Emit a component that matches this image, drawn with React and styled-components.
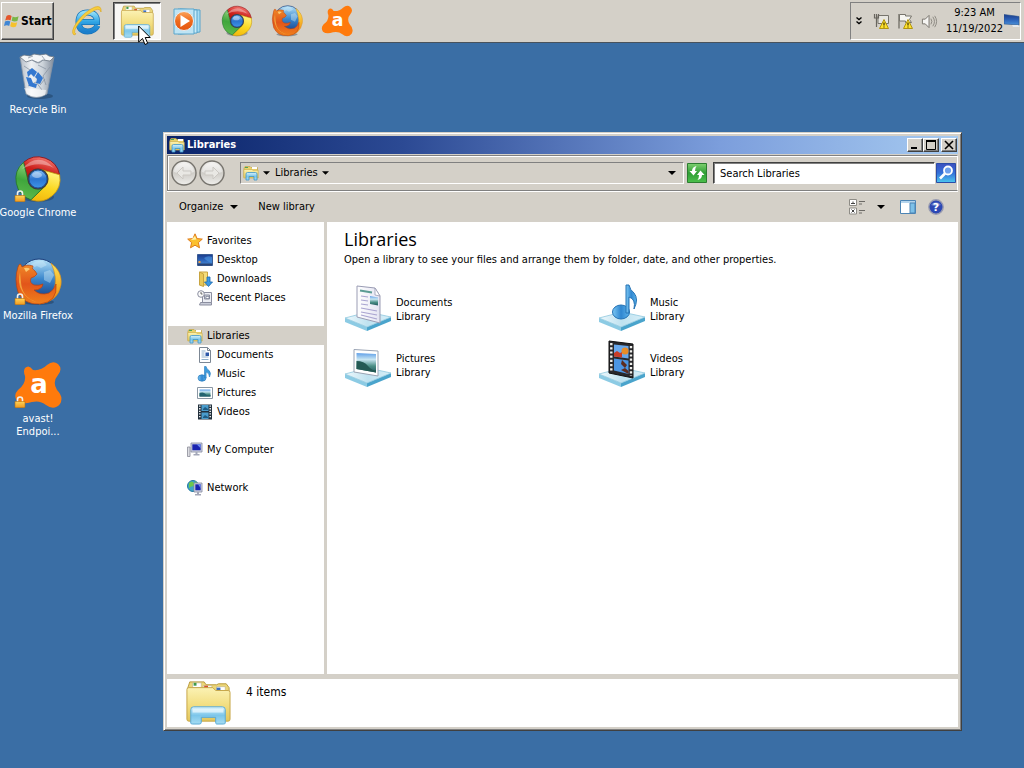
import React from "react";
import styled, { createGlobalStyle, css } from "styled-components";

const face = "#d4d0c8";
const uiFont = '"DejaVu Sans Condensed", "DejaVu Sans", "Liberation Sans", sans-serif';

const GlobalStyle = createGlobalStyle`
  * { box-sizing: border-box; }
  body { margin: 0; background: #3a6ea5; font: 11px/14px ${uiFont}; color: #000; }
  button, input { font: inherit; color: inherit; margin: 0; }
  svg { display: block; flex: none; }
`;

const raised = css`
  border: 1px solid;
  border-color: #fff #404040 #404040 #fff;
  box-shadow: inset -1px -1px 0 #808080;
`;
const sunken = css`
  border: 1px solid;
  border-color: #808080 #fff #fff #808080;
`;
const plainButton = css`
  border: 0;
  padding: 0;
  background: none;
`;

/* ---------- shared paint ---------- */

const HiddenSvg = styled.svg`
  position: absolute;
  width: 0;
  height: 0;
`;

const Grad = ({ id, stops, flat }) => (
  <linearGradient id={id} x1="0" y1="0" x2={flat ? "1" : "0"} y2={flat ? "0" : "1"}>
    {stops.map((c, i) => (
      <stop key={i} offset={i / (stops.length - 1)} stopColor={c} />
    ))}
  </linearGradient>
);

const Paints = () => (
  <HiddenSvg aria-hidden="true">
    <defs>
      <Grad id="folder" stops={["#fbf2b4", "#f3df83", "#e3c65c"]} />
      <Grad id="stand" stops={["#d8f2fc", "#7cc6ea", "#a5dcf2"]} />
      <Grad id="red" stops={["#f0706a", "#cc1f1a", "#a80f10"]} />
      <Grad id="green" stops={["#8fd27c", "#3fa63c", "#5cb84c"]} />
      <Grad id="yellow" stops={["#fff27a", "#fbd721", "#f2b70c"]} />
      <Grad id="blue" stops={["#8cc4f6", "#2b74d0", "#3f94e8"]} />
      <Grad id="fox" stops={["#f08a28", "#e2551a", "#f0801c"]} />
      <Grad id="foxTail" stops={["#fbe25c", "#f6b52a", "#ee7a18"]} />
      <Grad id="globe" stops={["#b6e2f8", "#3a86cc", "#173f86"]} />
      <Grad id="ie" stops={["#8fdcf8", "#2fa4e4", "#1c7fcc"]} />
      <Grad id="orange" stops={["#fba45c", "#ef6a1c", "#e45510"]} />
      <Grad id="glassTop" flat stops={["#eef8fc", "#bfe2f0", "#d8eff8"]} />
      <Grad id="note" flat stops={["#7cc8f4", "#2f86d0", "#5cb4ec"]} />
      <Grad id="sky" stops={["#5f9fe8", "#c9e6f2", "#4b8f86", "#235a60"]} />
      <Grad id="screen" stops={["#1c3c8c", "#2c62b8", "#4a90d8"]} />
      <Grad id="paper" flat stops={["#ffffff", "#e4e4f2"]} />
      <Grad id="bin" flat stops={["#b4bcc6", "#eef1f4", "#ccd3da", "#808b9a"]} />
      <Grad id="lock" stops={["#ffd35a", "#f0981c"]} />
      <Grad id="nav" stops={["#f4f3f1", "#cfcdc8", "#efeeeb"]} />
      <Grad id="go" stops={["#7fd070", "#2f9e34", "#4cc04c"]} />
      <Grad id="find" stops={["#3c50c0", "#3470d8", "#4cc8f0"]} />
    </defs>
  </HiddenSvg>
);

const Svg = ({ size, box = size, children, ...rest }) => (
  <svg width={size} height={size} viewBox={`0 0 ${box} ${box}`} fill="none" aria-hidden="true" {...rest}>
    {children}
  </svg>
);

/* ---------- application icons ---------- */

const ExplorerIcon = ({ size }) => (
  <Svg size={size} box={48}>
    <path d="M3 9 L5 3 H20 L22 6 H33 L35 5 H43 L46 9 V42 H3Z" fill="#ecd678" stroke="#b89a3c" />
    <path d="M8 4h9v5H8zM19 7h9v5h-9zM33 8h9v4h-9z" fill="#fff" stroke="#b9ae88" strokeWidth=".6" />
    <path d="M9 4h3v3H9z" fill="#3f9a4a" />
    <path d="M20 7h4v3h-4z" fill="#d8502e" />
    <path d="M33 9h4v3h-4z" fill="#3b6fc0" />
    <path d="M2 11 Q2 9 4 9 H29 L32 12 H45 Q47 12 47 14 V42 Q47 44 45 44 H4 Q2 44 2 42Z" fill="url(#folder)" stroke="#c6a548" />
    <path d="M6 46 V32 Q6 29 9 29 H39 Q42 29 42 32 V46 Q42 47 40 47 H33 Q32 47 32 45 V40 H17 V45 Q17 47 15 47 H8 Q6 47 6 46Z" fill="url(#stand)" stroke="#58a8d4" />
    <path d="M8 31h32v4H8z" fill="#eefaff" opacity=".7" />
  </Svg>
);

const SmallLibraryIcon = () => (
  <Svg size={16}>
    <path d="M1 3 L2 1.5 H7 L8 2.5 H14.5 V12 H1Z" fill="#ead36c" stroke="#c2a548" strokeWidth=".7" />
    <path d="M9 2h5v2H9z" fill="#fff" />
    <path d="M2 2h3v1H2z" fill="#4da35a" />
    <path d="M.8 4.5H9l1 .8h5.2V13H.8z" fill="url(#folder)" stroke="#cdb04f" strokeWidth=".7" />
    <path d="M3 15V9q0-1.500 1.500-1.500h8q1.500 0 1.500 1.500v6h-3v-3.500H6V15z" fill="url(#stand)" stroke="#3a94cc" strokeWidth=".8" />
  </Svg>
);

const ChromeIcon = ({ size }) => (
  <Svg size={size} box={48}>
    <ellipse cx="24" cy="42" rx="16" ry="5" fill="#1a2a40" opacity=".35" />
    <g transform="rotate(16 24 24)" strokeWidth=".8">
      <path d="M5.500 12 A22 22 0 0 1 43.600 14 H24 A10 10 0 0 0 15.300 29Z" fill="url(#red)" stroke="#931012" />
      <path d="M43.600 14 A22 22 0 0 1 22.900 46 L32.700 29 A10 10 0 0 0 24 14Z" fill="url(#yellow)" stroke="#c99710" />
      <path d="M22.900 46 A22 22 0 0 1 5.500 12 L15.300 29 A10 10 0 0 0 32.700 29Z" fill="url(#green)" stroke="#23782a" />
    </g>
    <path d="M8 14 Q24 -4 40 13 Q24 5 8 14Z" fill="#fff" opacity=".35" />
    <circle cx="24" cy="24" r="10.500" fill="#403c3c" />
    <circle cx="24" cy="24" r="9" fill="url(#blue)" stroke="#1b559f" />
    <ellipse cx="23" cy="20" rx="5" ry="3" fill="#fff" opacity=".4" />
  </Svg>
);

const FirefoxIcon = ({ size }) => (
  <Svg size={size} box={48}>
    <ellipse cx="24" cy="44" rx="16" ry="3" fill="#14243c" opacity=".35" />
    <circle cx="25" cy="21" r="20" fill="url(#globe)" stroke="#1d3f7c" />
    <path d="M17 6q6-4 12-3l4 4-6 3-4-2-5 2zM30 14l6-2 4 5-4 8-6-3z" fill="#d8f0fb" opacity=".4" />
    <path d="M37 5 Q49 14 47 27 Q44 44 25 46 Q36 41 40 31 Q44 20 37 5Z" fill="url(#foxTail)" stroke="#d98a16" strokeWidth=".6" />
    <path d="M4 9 Q6 3 8 9 Q12 6 19 8 Q17 11 21 13 L23 16 Q21 19 17 20 Q15 25 20 27 Q25 28 29 26 Q28 32 20 32 Q26 38 35 35 Q40 32 42 26 Q44 44 26 46 Q10 47 4 34 Q0 21 4 9Z" fill="url(#fox)" stroke="#b9400f" strokeWidth=".7" />
    <path d="M6 14 Q3 25 8 33 Q13 42 23 44 Q8 40 7 24Z" fill="#fac14a" opacity=".7" />
    <path d="M10 10q4-1 6 1l-4 3z" fill="#fbc870" />
  </Svg>
);

const AvastIcon = ({ size }) => (
  <Svg size={size} box={48}>
    <path d="M19 9 Q27 10 33 4 Q39 -1 44 3 Q49 8 44 14 Q38 21 43 29 Q50 36 46 43 Q40 50 32 44 Q26 39 18 41 Q8 44 3 40 Q-1 34 4 29 Q12 23 11 15 Q9 10 11 7 Q15 3 19 9Z" fill="#ff7a0c" />
    <text x="25" y="32" textAnchor="middle" fontFamily="DejaVu Sans, sans-serif" fontWeight="700" fontSize="26" fill="#fff">a</text>
  </Svg>
);

const IeIcon = ({ size }) => (
  <Svg size={size} box={32}>
    <path d="M26.500 20.500 Q23.500 26.500 16.500 26.500 Q7.500 26 7.500 16.500 Q8 7.500 16.500 7.500 Q26 7.500 26 17 H9" stroke="#1673b8" strokeWidth="6" />
    <path d="M26.500 20.500 Q23.500 26.500 16.500 26.500 Q7.500 26 7.500 16.500 Q8 7.500 16.500 7.500 Q26 7.500 26 17 H9" stroke="url(#ie)" strokeWidth="4.600" />
    <path d="M3 30 Q-1 27 6 17 Q14 6 24 2 Q31 0 30 7 Q29 3 24 5 Q15 9 8 18 Q1 27 5 29Z" fill="#f8ce3c" stroke="#dca41c" strokeWidth=".6" />
  </Svg>
);

const MediaPlayerIcon = ({ size }) => (
  <Svg size={size} box={32}>
    <path d="M9 4 L29 5 V27 L9 29Z" fill="#a8dcf2" stroke="#58a4cc" />
    <path d="M7 4 L26 5 V28 L7 29Z" fill="#c9ebf8" stroke="#58a4cc" />
    <path d="M3 4 H23 V29 H3Z" fill="#bfe4f4" stroke="#5aa6cc" />
    <circle cx="13" cy="16" r="9.500" fill="url(#orange)" stroke="#e8eef2" />
    <path d="M9.500 10 L19 16 L9.500 22Z" fill="#fff" />
  </Svg>
);

const RecycleIcon = () => (
  <Svg size={48}>
    <ellipse cx="26" cy="44" rx="13" ry="3" fill="#16304c" opacity=".4" />
    <path d="M6 5 L12 42 Q22 49 33 42 L40 5Z" fill="url(#bin)" stroke="#8894a4" strokeWidth=".8" />
    <path d="M6 5 L10 3 L16 4 L20 2 L26 3 L32 2 L35 4 L40 5 L36 9 L29 8 L25 11 L18 8 L12 10Z" fill="#f4f6f8" stroke="#6c7784" strokeWidth=".8" />
    <path d="M18 8l5 3 6-3M28 4l3 4M14 6l5-2M10 14l9 6M36 15l-7 9 3 9M14 34l8-4 6 8M24 13l8 4M31 27l-5 6" stroke="#8a95a3" strokeWidth=".8" />
    <path d="M10 36 L32 38 L31 43 Q22 47 13 42Z" fill="#fff" opacity=".6" />
    <path d="M13 20l5-4 5 4-3 5-3-3-3 3zM24 20l5 6-3 6-4-1 1-4-2-2zM12 25l5 1 2 5 4 1-1 4-7-2z" fill="#3478d0" />
  </Svg>
);

const LockIcon = () => (
  <Svg size={12}>
    <path d="M3.500 6V3.500a2.500 2.500 0 0 1 5 0V6" stroke="#f2f2ee" strokeWidth="1.600" />
    <path d="M1 5.500h10V11q0 .8-1 .8H2q-1 0-1-.8z" fill="url(#lock)" stroke="#b8700e" strokeWidth=".6" />
  </Svg>
);

const FlagLogo = () => (
  <Svg size={16}>
    <path d="M2.500 3 Q5 1 7.600 3 L6.600 7.500 Q4 6 1.200 7.600Z" fill="#e4562c" />
    <path d="M8.600 3.500 Q11 5 14.600 3.300 L13.400 8 Q10.500 9 7.600 7.800Z" fill="#7ab648" />
    <path d="M1 8.600 Q4 7 6.300 8.500 L5.200 13 Q3 11.500 0 13Z" fill="#3f86d4" />
    <path d="M7.300 9 Q10 10.300 13.200 9.200 L12 13.600 Q9 15 6.200 13.300Z" fill="#f6c22c" />
  </Svg>
);

/* ---------- tray icons ---------- */

const Warning = () => (
  <g>
    <path d="M11 6.500 L15.500 15.500 H6.500Z" fill="#ffe22c" stroke="#b09410" strokeLinejoin="round" />
    <path d="M11 9.500v3M11 13.500v1" stroke="#3c3000" strokeWidth="1.200" />
  </g>
);
const NetTrayIcon = () => (
  <Svg size={16}>
    <path d="M5 2.500h10.500v8H5z" fill="#e8e6e0" stroke="#77746c" />
    <path d="M1.500 1v4h4V1M3.500 1v13" stroke="#68655e" strokeWidth="1.200" />
    <Warning />
  </Svg>
);
const FlagTrayIcon = () => (
  <Svg size={16}>
    <path d="M2 15.500V1" stroke="#77746c" strokeWidth="1.400" />
    <path d="M2.500 1.500h6v1.500h6l-2 3.500 2 3h-6V8h-6z" fill="#f7f6f2" stroke="#77746c" />
    <Warning />
  </Svg>
);
const SpeakerIcon = () => (
  <Svg size={17} box={18}>
    <path d="M1.500 6.500h3L8.500 2.500v13l-4-4h-3z" fill="#f6f5f2" stroke="#77746c" />
    <path d="M10.500 6q2 3 0 6M12.500 4q3.500 5 0 10M14.500 3q4 6 0 12" stroke="#8a877f" />
  </Svg>
);
const ShowDesktopIcon = () => (
  <Svg size={16}>
    <path d="M0 1.500 L15 3.500 V12 L0 11Z" fill="url(#screen)" stroke="#2c548c" strokeWidth=".6" />
    <path d="M8 12h6l2 2H9z" fill="#e4e8ec" />
  </Svg>
);
const ChevronsIcon = () => (
  <Svg size={10}>
    <path d="M1.500 1.500l2.500 2 2.500-2M1.500 5.500l2.500 2 2.500-2" stroke="#000" strokeWidth="1.400" />
  </Svg>
);

/* ---------- sidebar icons ---------- */

const StarIcon = () => (
  <Svg size={16}>
    <path d="M8 .8l2.100 4.800 5.200.5-3.900 3.500 1.100 5.200L8 12.200l-4.500 2.600 1.100-5.200L.7 6.100l5.200-.5z" fill="#fbc02f" stroke="#e07d1c" strokeLinejoin="round" />
    <path d="M8 3l1.300 3.500L4 7z" fill="#fff2a8" />
  </Svg>
);
const DesktopIcon = () => (
  <Svg size={16}>
    <path d="M.5 2.500h15v11H.5z" fill="url(#screen)" stroke="#3a5c94" />
    <path d="M7 6q4-3 8-1v6q-5-1-8-5z" fill="#4f9ae4" opacity=".6" />
    <path d="M1 11.500h14v2H1z" fill="#2a4474" />
    <path d="M1.500 9h2v2h-2z" fill="#f0a040" />
  </Svg>
);
const DownloadsIcon = () => (
  <Svg size={16}>
    <path d="M2.500 1h8v13h-8z" fill="#f4dd7c" stroke="#c8a440" />
    <path d="M2.500 1l4 2v12.500l-4-1.500z" fill="#e8c858" stroke="#c8a440" />
    <path d="M10 6h3v5h2.500l-4 4.500-4-4.500H10z" fill="#3c9ae4" stroke="#1c68ac" strokeWidth=".8" />
  </Svg>
);
const RecentIcon = () => (
  <Svg size={16}>
    <path d="M5.500 2.500h9v10h-9z" fill="#eceef4" stroke="#8c8fa0" />
    <path d="M7.500 5h5v4h-5zM3.500 12.500h11v2.500h-12z" fill="#c8ccd8" stroke="#8c8fa0" />
    <path d="M9 6.500h3v2H9z" fill="#fff" stroke="#6a7088" strokeWidth=".6" />
    <circle cx="4" cy="4" r="3.300" fill="#fafafa" stroke="#8c8fa0" />
    <path d="M4 2v2h1.500" stroke="#444" strokeWidth=".8" />
  </Svg>
);
const DocIcon = () => (
  <Svg size={16}>
    <path d="M2.500 .5h8l3 3v12h-11z" fill="#fff" stroke="#7c8794" />
    <path d="M10.500 .5v3h3" stroke="#7c8794" />
    <path d="M4.500 4h4M4.500 6h3M4.500 8h3M4.500 10h7M4.500 12.500h7" stroke="#8fb0cc" />
    <path d="M8.500 5.500h3.500V9H8.500z" fill="#2c58a8" />
  </Svg>
);
const MusicIcon = () => (
  <Svg size={16}>
    <ellipse cx="5" cy="12" rx="4" ry="3.200" fill="url(#note)" stroke="#2a7cc0" strokeWidth=".7" />
    <path d="M7.500 12V.5h1.600q.3 2.500 3 4 2.500 2.500.4 6.500 0-4-3.400-5V12z" fill="#3f9cdc" stroke="#2a7cc0" strokeWidth=".6" />
  </Svg>
);
const PictureIcon = () => (
  <Svg size={16}>
    <path d="M.5 2.500h15v11H.5z" fill="#fff" stroke="#8a97a4" />
    <path d="M2.500 4.500h11v7h-11z" fill="url(#sky)" />
    <path d="M2.500 11.500V8q4-1.500 6 1t5 1v1.500z" fill="#246470" />
  </Svg>
);
const FilmIcon = () => (
  <Svg size={16}>
    <path d="M1 .5h14v15H1z" fill="#22303c" />
    <path d="M4.500 1h7v6h-7zM4.500 8.500h7V15h-7z" fill="#4a9ccc" />
    <path d="M6 5l2-2 3 2v1H6zM6 13l2-2 3 2v1H6z" fill="#1f5c84" />
    <path d="M2.800 1.500v13M13.200 1.500v13" stroke="#e8ecee" strokeWidth="1.600" strokeDasharray="1.300 1.300" />
  </Svg>
);
const Monitor = ({ x, y, w = 10 }) => (
  <g transform={`translate(${x} ${y})`}>
    <path d={`M0 0h${w}v9H0z`} fill="#d6d9e2" stroke="#8186a0" strokeWidth=".8" />
    <path d={`M1.300 1.300h${w - 2.6}v6H1.300z`} fill="#1a24b0" />
    <path d={`M${w / 2} 1.300h${w / 2 - 1.3}v4z`} fill="#6f8cf0" />
    <path d={`M${w / 2 - 1} 9h2v2h2v1.400h-6V11h2z`} fill="#a3a7b8" />
  </g>
);
const ComputerIcon = () => (
  <Svg size={16}>
    <path d="M.5 5h2.500v9.500H.5z" fill="#dcdde2" stroke="#8a8c98" strokeWidth=".8" />
    <Monitor x={4} y={1} w={11} />
  </Svg>
);
const NetworkIcon = () => (
  <Svg size={16}>
    <circle cx="6" cy="6" r="5.500" fill="#3ea4c8" stroke="#2278a0" />
    <path d="M2 3q3-3 5 0 1 3-2 3.500T2 9zM8 1q3 2 3 4L9 6z" fill="#6cc84c" />
    <Monitor x={7} y={3} w={8} />
  </Svg>
);

/* ---------- large library icons ---------- */

const Plinth = () => (
  <g>
    <path d="M1 34 L23 43 V47 L1 38Z" fill="#8ccbe4" />
    <path d="M23 43 L47 33 V37 L23 47Z" fill="#4aa4cc" />
    <path d="M1 34 L24 28 L47 33 L23 43Z" fill="url(#glassTop)" stroke="#8fc8de" strokeWidth=".8" />
  </g>
);
const DocumentsLarge = () => (
  <Svg size={48}>
    <Plinth />
    <path d="M13 2 L31 4 L36 12 V39 L13 33Z" fill="url(#paper)" stroke="#9a9cb4" />
    <path d="M31 4 V11 L36 12Z" fill="#fff" stroke="#9a9cb4" strokeWidth=".8" />
    <path d="M16 6.500l12 2" stroke="#5c9c94" strokeWidth="2" />
    <path d="M17 12l7 1M17 16l7 1M17 20l7 1M17 24l16 3M17 28l16 3M17 31l16 4" stroke="#a9a4d0" strokeWidth="1.200" />
    <path d="M26 12l8 1.500v8L26 20z" fill="url(#sky)" />
  </Svg>
);
const PicturesLarge = () => (
  <Svg size={48}>
    <Plinth />
    <path d="M10 9.500 L34 11 V36 L10 32Z" fill="#fff" stroke="#9aa4b4" />
    <path d="M12.500 13 L32 14 V32.500 L12.500 29Z" fill="url(#sky)" />
    <path d="M12.500 21 Q20 21 24 26 T32 30 V32.500 L12.500 29Z" fill="#245a54" />
  </Svg>
);
const MusicLarge = () => (
  <Svg size={48}>
    <Plinth />
    <ellipse cx="23" cy="28" rx="8.500" ry="7" fill="url(#note)" stroke="#2472b4" />
    <path d="M28 29 V1 H31 Q32 6 36 9 Q41 15 36 25 Q38 15 31 13 V29Z" fill="url(#note)" stroke="#2472b4" />
  </Svg>
);
const VideosLarge = () => (
  <Svg size={48}>
    <Plinth />
    <path d="M11 1 L35 4 V38 L11 33Z" fill="#28282c" stroke="#111" />
    <path d="M16 4.500 L30.500 6 V18.500 L16 16.500Z" fill="#68a8ec" />
    <path d="M16 18.500 L30.500 20.500 V34 L16 30.500Z" fill="#4c96e4" />
    <path d="M16 13 l3-2 3 2 2-1v5.500l-8-1z" fill="#c83c28" />
    <circle cx="27" cy="11" r="3.500" fill="#e88c28" />
    <path d="M24 20l5 5-2 3-4-4zM23 30l4-2 3.500 3v3z" fill="#5c2c20" />
    <path d="M13.300 3v29M33 6v30" stroke="#f2f2ee" strokeWidth="2.400" strokeDasharray="2.200 2" />
  </Svg>
);

/* ---------- toolbar glyphs ---------- */

const Caret = ({ w = 7 }) => (
  <svg width={w} height={4} viewBox="0 0 8 4" aria-hidden="true">
    <path d="M0 0h8L4 4z" fill="#000" />
  </svg>
);
const NavArrow = ({ flip }) => (
  <Svg size={26}>
    <circle cx="13" cy="13" r="12" fill="url(#nav)" stroke="#77746e" strokeWidth="1.400" />
    <path d="M3 12a10 9 0 0 1 20 0q-10 4-20 0z" fill="#fff" opacity=".4" />
    <path d="M6 13l6-6v4h8v4h-8v4z" transform={flip ? "rotate(180 13 13)" : undefined} fill="#e9e8e4" stroke="#cbc8c3" />
  </Svg>
);
const RefreshIcon = () => (
  <Svg size={20}>
    <path d="M.5 .5h19v19H.5z" fill="url(#go)" stroke="#2c7c30" />
    <path d="M9.500 3 Q5 4 5 8H2.500L6.500 12.500 10 8H8Q8 5 9.500 3zM10.500 17 Q15 16 15 12h2.500L13.500 7.500 10 12h2Q12 15 10.500 17z" fill="#fff" />
  </Svg>
);
const FindIcon = () => (
  <Svg size={20}>
    <path d="M.5 .5h19v19H.5z" fill="url(#find)" stroke="#2a4ca8" />
    <circle cx="12" cy="7.500" r="4" fill="#6fa0ec" stroke="#fff" strokeWidth="1.800" />
    <path d="M9 10.500l-5 5" stroke="#fff" strokeWidth="2.600" />
  </Svg>
);
const ViewsIcon = () => (
  <Svg size={16}>
    <path d="M.5 .5h7v6h-7zM.5 9h7v6h-7z" fill="#fff" stroke="#8e8c86" />
    <path d="M2 4.500h4M4 2.500v2M2.500 10.500l3 3m0-3l-3 3" stroke="#444" />
    <path d="M10 2.500h6M10 5h3M10 11.500h6M10 14h3" stroke="#6c6a66" />
  </Svg>
);
const PreviewIcon = () => (
  <Svg size={16}>
    <path d="M.5 1.500h15v13H.5z" fill="#fff" stroke="#4c84b4" />
    <path d="M1 2h14v2H1z" fill="#b4d4ec" />
    <path d="M10 4h5v10h-5z" fill="#7cc0e8" stroke="#4c84b4" />
  </Svg>
);
const HelpIcon = () => (
  <Svg size={16}>
    <circle cx="8" cy="8" r="7.200" fill="#2c48b4" stroke="#9a9cb0" strokeWidth="1.400" />
    <path d="M3 6a5.500 4.500 0 0 1 10 0q-5 2-10 0z" fill="#fff" opacity=".3" />
    <text x="8" y="12" textAnchor="middle" fontFamily="DejaVu Sans, sans-serif" fontWeight="700" fontSize="11" fill="#fff">?</text>
  </Svg>
);

/* ---------- taskbar ---------- */

const Desktop = styled.div`
  position: relative;
  display: flex;
  flex-direction: column;
  min-height: 100vh;
  overflow: hidden;
`;

const Taskbar = styled.header`
  display: flex;
  align-items: stretch;
  height: 43px;
  padding: 2px 3px 2px 1px;
  background: ${face};
  border-bottom: 1px solid #48525c;
`;

const StartButton = styled.button`
  ${raised}
  display: flex;
  align-items: center;
  gap: 1px;
  width: 53px;
  padding: 0 2px;
  background: ${face};
  font-weight: 700;
  font-size: 12px;
`;

const QuickLaunch = styled.nav`
  display: flex;
  flex: 1;
  gap: 2px;
  margin-left: 9px;
`;

const TaskButton = styled.button`
  ${plainButton}
  display: grid;
  place-items: center;
  width: 48px;
  border: 1px solid transparent;
  ${(p) =>
    p.$active &&
    css`
      background: #f8f7f5;
      border-color: #404040 #fff #fff #404040;
      box-shadow: inset 1px 1px 0 #808080;
    `}
`;

const Tray = styled.div`
  ${sunken}
  display: flex;
  align-items: center;
  gap: 8px;
  padding-left: 4px;
`;

const TrayButton = styled.button`
  ${plainButton}
`;

const ClockArea = styled.div`
  display: flex;
  align-items: center;
  gap: 1px;
`;

const Clock = styled.time`
  text-align: center;
  line-height: 16px;
`;

/* ---------- desktop shortcuts ---------- */

const ShortcutList = styled.div`
  display: flex;
  flex-direction: column;
  align-items: flex-start;
  padding-top: 9px;
`;

const Shortcut = styled.button`
  ${plainButton}
  display: flex;
  flex-direction: column;
  align-items: center;
  gap: 3px;
  width: 76px;
  height: 103px;
  color: #fff;
  line-height: 13px;
  white-space: nowrap;
`;

const ShortcutArt = styled.span`
  position: relative;
  display: block;
`;

const Badge = styled.span`
  position: absolute;
  left: 0;
  bottom: 1px;
`;

const Pointer = styled.svg`
  position: absolute;
  left: 138px;
  top: 25px;
  pointer-events: none;
`;

/* ---------- window ---------- */

const Window = styled.main`
  position: absolute;
  left: 163px;
  right: 62px;
  top: 132px;
  bottom: 37px;
  display: flex;
  flex-direction: column;
  padding: 3px;
  background: ${face};
  border: 1px solid;
  border-color: ${face} #404040 #404040 ${face};
  box-shadow: inset 1px 1px 0 #fff, inset -1px -1px 0 #808080;
`;

const TitleBar = styled.div`
  display: flex;
  align-items: center;
  gap: 2px;
  height: 18px;
  padding: 0 1px 0 2px;
  color: #fff;
  background: linear-gradient(90deg, #0a246a, #2c4a94 30%, #7c9edc 70%, #a6caf0);
`;

const WindowTitle = styled.h1`
  flex: 1;
  margin: 0;
  font-size: 11px;
`;

const CaptionPair = styled.div`
  display: flex;
`;

const CaptionButton = styled.button`
  ${raised}
  display: grid;
  place-items: center;
  width: 16px;
  height: 14px;
  padding: 0;
  background: ${face};
`;

const AddressRow = styled.div`
  display: flex;
  align-items: center;
  height: 36px;
  margin-top: 1px;
  padding: 0 1px 0 3px;
  border: 1px solid #808080;
  border-right-color: #fff;
  box-shadow: inset 1px 1px 0 #fff, 0 1px 0 #fff;
`;

const RoundButton = styled.button`
  ${plainButton}
  width: 28px;
`;

const AddressBox = styled.div`
  ${sunken}
  display: flex;
  flex: 1;
  align-items: center;
  gap: 4px;
  height: 22px;
  margin-left: 13px;
  padding: 0 7px 0 2px;
`;

const Crumb = styled.button`
  ${plainButton}
  display: flex;
  align-items: center;
  gap: 5px;
`;

const Spacer = styled.span`
  flex: 1;
`;

const GoButton = styled.button`
  ${plainButton}
  margin-left: ${(p) => (p.$attached ? "1px" : "3px")};
`;

const SearchInput = styled.input`
  width: 222px;
  height: 22px;
  margin-left: 6px;
  padding: 0 6px;
  border: 1px solid;
  border-color: #404040 #fff #fff #404040;
  box-shadow: inset 1px 1px 0 #808080;
  background: #fff;
  &::placeholder {
    color: #000;
    opacity: 1;
  }
`;

const CommandBar = styled.div`
  display: flex;
  align-items: center;
  height: 31px;
  padding: 0 14px 0 12px;
`;

const CommandButton = styled.button`
  ${plainButton}
  display: flex;
  align-items: center;
  gap: 7px;
  margin-right: 20px;
`;

const IconButton = styled.button`
  ${plainButton}
  margin-left: ${(p) => (p.$apart ? "15px" : "12px")};
`;

const Body = styled.div`
  display: flex;
  flex: 1;
  min-height: 0;
`;

const Sidebar = styled.nav`
  width: 160px;
  padding: 9px 0 0 1px;
  background: #fff;
  border-right: 3px solid ${face};
`;

const TreeGroup = styled.ul`
  margin: 0 0 19px;
  padding: 0;
  list-style: none;
`;

const TreeLink = styled.a`
  display: flex;
  align-items: center;
  gap: 4px;
  height: 19px;
  padding-left: ${(p) => (p.$child ? "29px" : "19px")};
  color: #000;
  line-height: 15px;
  text-decoration: none;
  background: ${(p) => (p.$selected ? face : "none")};
`;

const Content = styled.section`
  flex: 1;
  padding: 7px 17px;
  background: #fff;
`;

const Heading = styled.h2`
  margin: 0;
  font: 400 18px/20px "Open Sans", "Noto Sans", sans-serif;
`;

const Hint = styled.p`
  margin: 4px 0 0;
`;

const LibraryGrid = styled.div`
  display: grid;
  grid-template-columns: repeat(auto-fill, 254px);
  grid-auto-rows: 56px;
  margin-top: 15px;
`;

const LibraryItem = styled.button`
  ${plainButton}
  display: flex;
  align-items: center;
  gap: 4px;
  padding-top: 2px;
  align-self: start;
  text-align: left;
`;

const LibraryLabel = styled.span`
  padding-top: 4px;
`;

const DetailsPane = styled.footer`
  display: flex;
  gap: 15px;
  height: 53px;
  padding: 0 18px;
  background: #fff;
  border-top: 5px solid ${face};
  font-size: 12px;
  line-height: 26px;
`;

const shortcuts = [
  { lines: ["Recycle Bin"], art: <RecycleIcon /> },
  { lines: ["Google Chrome"], art: <ChromeIcon size={48} />, locked: true },
  { lines: ["Mozilla Firefox"], art: <FirefoxIcon size={48} />, locked: true },
  { lines: ["avast!", "Endpoi..."], art: <AvastIcon size={48} />, locked: true },
];

const pinned = [
  { name: "Internet Explorer", art: <IeIcon size={32} /> },
  { name: "Windows Explorer", art: <ExplorerIcon size={34} />, active: true },
  { name: "Media Player", art: <MediaPlayerIcon size={32} /> },
  { name: "Google Chrome", art: <ChromeIcon size={32} /> },
  { name: "Mozilla Firefox", art: <FirefoxIcon size={32} /> },
  { name: "avast!", art: <AvastIcon size={32} /> },
];

const tree = [
  [
    { name: "Favorites", icon: <StarIcon /> },
    { name: "Desktop", icon: <DesktopIcon />, child: true },
    { name: "Downloads", icon: <DownloadsIcon />, child: true },
    { name: "Recent Places", icon: <RecentIcon />, child: true },
  ],
  [
    { name: "Libraries", icon: <SmallLibraryIcon />, selected: true },
    { name: "Documents", icon: <DocIcon />, child: true },
    { name: "Music", icon: <MusicIcon />, child: true },
    { name: "Pictures", icon: <PictureIcon />, child: true },
    { name: "Videos", icon: <FilmIcon />, child: true },
  ],
  [{ name: "My Computer", icon: <ComputerIcon /> }],
  [{ name: "Network", icon: <NetworkIcon /> }],
];

const libraries = [
  { name: "Documents", art: <DocumentsLarge /> },
  { name: "Music", art: <MusicLarge /> },
  { name: "Pictures", art: <PicturesLarge /> },
  { name: "Videos", art: <VideosLarge /> },
];

export default function App() {
  return (
    <Desktop>
      <GlobalStyle />
      <Paints />
      <Taskbar>
        <StartButton><FlagLogo />Start</StartButton>
        <QuickLaunch aria-label="Quick launch">
          {pinned.map((p) => (
            <TaskButton key={p.name} aria-label={p.name} $active={p.active}>{p.art}</TaskButton>
          ))}
        </QuickLaunch>
        <Tray>
          <TrayButton aria-label="Show hidden icons"><ChevronsIcon /></TrayButton>
          <TrayButton aria-label="Network status"><NetTrayIcon /></TrayButton>
          <TrayButton aria-label="Action center"><FlagTrayIcon /></TrayButton>
          <TrayButton aria-label="Volume"><SpeakerIcon /></TrayButton>
          <ClockArea>
            <Clock>9:23 AM<br />11/19/2022</Clock>
            <TrayButton aria-label="Show desktop"><ShowDesktopIcon /></TrayButton>
          </ClockArea>
        </Tray>
      </Taskbar>

      <ShortcutList>
        {shortcuts.map((s) => (
          <Shortcut key={s.lines[0]}>
            <ShortcutArt>
              {s.art}
              {s.locked && <Badge><LockIcon /></Badge>}
            </ShortcutArt>
            <span>{s.lines.map((l) => <React.Fragment key={l}>{l}<br /></React.Fragment>)}</span>
          </Shortcut>
        ))}
      </ShortcutList>

      <Window>
        <TitleBar>
          <SmallLibraryIcon />
          <WindowTitle>Libraries</WindowTitle>
          <CaptionPair>
            <CaptionButton aria-label="Minimize">
              <Svg size={10}><path d="M1 8h6" stroke="#000" strokeWidth="2" /></Svg>
            </CaptionButton>
            <CaptionButton aria-label="Maximize">
              <Svg size={10}><path d="M.5 1h9M.5 0v9.500h9V0" stroke="#000" /><path d="M0 1h10" stroke="#000" strokeWidth="2" /></Svg>
            </CaptionButton>
          </CaptionPair>
          <CaptionButton aria-label="Close">
            <Svg size={10}><path d="M1 1l8 8M9 1l-8 8" stroke="#000" strokeWidth="1.600" /></Svg>
          </CaptionButton>
        </TitleBar>

        <AddressRow>
          <RoundButton aria-label="Back"><NavArrow /></RoundButton>
          <RoundButton aria-label="Forward"><NavArrow flip /></RoundButton>
          <AddressBox>
            <SmallLibraryIcon />
            <Crumb><Caret />Libraries</Crumb>
            <Crumb aria-label="Show locations"><Caret /></Crumb>
            <Spacer />
            <Crumb aria-label="Previous locations"><Caret w={8} /></Crumb>
          </AddressBox>
          <GoButton aria-label="Refresh"><RefreshIcon /></GoButton>
          <SearchInput type="text" aria-label="Search Libraries" placeholder="Search Libraries" />
          <GoButton aria-label="Search" $attached><FindIcon /></GoButton>
        </AddressRow>

        <CommandBar>
          <CommandButton>Organize <Caret w={8} /></CommandButton>
          <CommandButton>New library</CommandButton>
          <Spacer />
          <IconButton aria-label="Change view"><ViewsIcon /></IconButton>
          <IconButton aria-label="More views"><Caret w={8} /></IconButton>
          <IconButton aria-label="Preview pane" $apart><PreviewIcon /></IconButton>
          <IconButton aria-label="Help"><HelpIcon /></IconButton>
        </CommandBar>

        <Body>
          <Sidebar aria-label="Folders">
            {tree.map((group) => (
              <TreeGroup key={group[0].name}>
                {group.map((n) => (
                  <li key={n.name}>
                    <TreeLink href="#" $child={n.child} $selected={n.selected}>{n.icon}{n.name}</TreeLink>
                  </li>
                ))}
              </TreeGroup>
            ))}
          </Sidebar>
          <Content>
            <Heading>Libraries</Heading>
            <Hint>Open a library to see your files and arrange them by folder, date, and other properties.</Hint>
            <LibraryGrid>
              {libraries.map((l) => (
                <LibraryItem key={l.name}>
                  {l.art}
                  <LibraryLabel>{l.name}<br />Library</LibraryLabel>
                </LibraryItem>
              ))}
            </LibraryGrid>
          </Content>
        </Body>

        <DetailsPane>
          <ExplorerIcon size={46} />
          <span>4 items</span>
        </DetailsPane>
      </Window>

      <Pointer width="13" height="21" viewBox="0 0 13 21" aria-hidden="true">
        <path d="M.7 1v16l3.800-3.500 2.500 6 2.700-1.200L7.200 12.500h5z" fill="#fff" stroke="#000" />
      </Pointer>
    </Desktop>
  );
}
